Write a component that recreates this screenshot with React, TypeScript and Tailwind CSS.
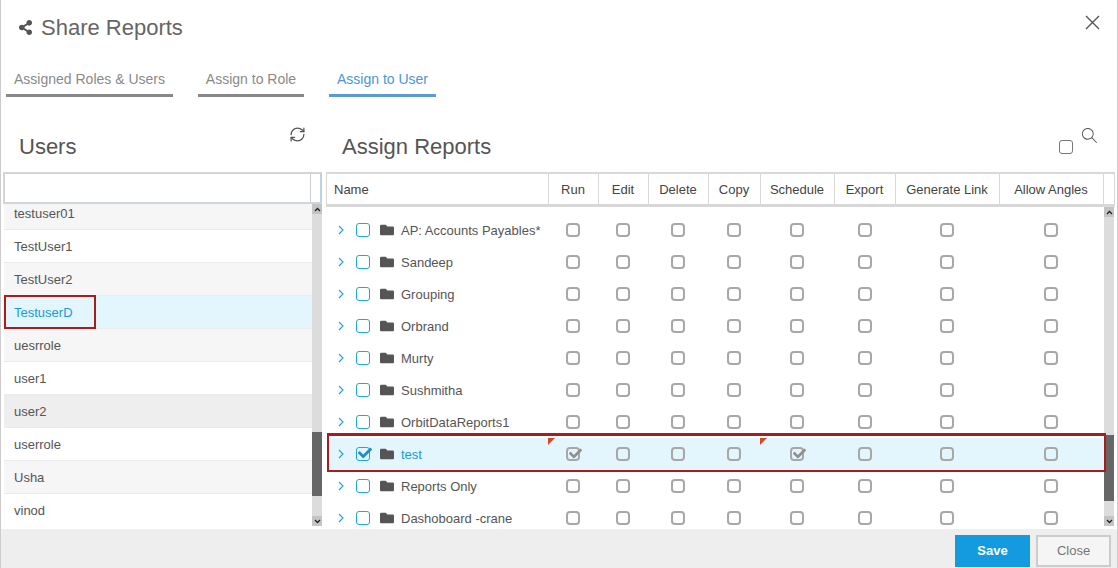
import React from "react";
import { FaShareAlt, FaFolder, FaCheck } from "react-icons/fa";
import { SlMagnifier } from "react-icons/sl";
import { RefreshCw } from "lucide-react";

const users = [
  { n: "testuser01", c: "bg-[#f6f6f6]" },
  { n: "TestUser1", c: "bg-white" },
  { n: "TestUser2", c: "bg-[#f6f6f6]" },
  { n: "TestuserD", c: "bg-[#e3f5fd] text-[#1a9ad6] border-[#cfe5f2]", sel: true },
  { n: "uesrrole", c: "bg-[#f6f6f6]" },
  { n: "user1", c: "bg-white border-[#dfe8ee]" },
  { n: "user2", c: "bg-[#eeeeee]" },
  { n: "userrole", c: "bg-white" },
  { n: "Usha", c: "bg-[#f6f6f6]" },
  { n: "vinod", c: "bg-white" },
];

const reports = [
  "AP: Accounts Payables*",
  "Sandeep",
  "Grouping",
  "Orbrand",
  "Murty",
  "Sushmitha",
  "OrbitDataReports1",
  "test",
  "Reports Only",
  "Dashoboard -crane",
];

const cols = ["Run", "Edit", "Delete", "Copy", "Schedule", "Export", "Generate Link", "Allow Angles"];
const grid = "grid grid-cols-[221px_50px_50px_60px_52px_74px_61px_104px_104px]";
const headGrid = "grid grid-cols-[222px_50px_50px_60px_52px_74px_61px_104px_104px]";

function Box({ checked }: { checked?: boolean }) {
  return (
    <span className="relative block w-[14px] h-[14px] rounded-[4px] border-2 border-[#a8a8a8]">
      {checked && <FaCheck className="absolute left-[1px] top-[-2px] text-[#8f8f8f]" size={13} />}
    </span>
  );
}

function BlueBox({ checked }: { checked?: boolean }) {
  return (
    <span className="relative block w-[14px] h-[14px] rounded-[3px] border-[1.5px] border-[#1fa5e6] shrink-0">
      {checked && <FaCheck className="absolute left-[1px] top-[-2px] text-[#1a8fd0]" size={14} />}
    </span>
  );
}

function Chevron() {
  return (
    <svg width="6" height="10" viewBox="0 0 6 10" className="shrink-0">
      <path d="M1 1l4 4-4 4" fill="none" stroke="#2d9fdb" strokeWidth="1.2" />
    </svg>
  );
}

function Arrow({ up }: { up?: boolean }) {
  return (
    <span className="flex items-center justify-center h-[10px] bg-[#c4c4c4]">
      <svg width="7" height="5" viewBox="0 0 7 5">
        <path d={up ? "M1 4l2.5-2.5L6 4" : "M1 1l2.5 2.5L6 1"} fill="none" stroke="#222" strokeWidth="1.3" />
      </svg>
    </span>
  );
}

function Scrollbar({ before, thumb }: { before: string; thumb: string }) {
  return (
    <div className="w-[10px] h-full flex flex-col bg-[#dcdcdc] shrink-0">
      <Arrow up />
      <div className={before} />
      <div className={`${thumb} bg-[#666666]`} />
      <div className="flex-1" />
      <Arrow />
    </div>
  );
}

function Tab({ label, active, w }: { label: string; active?: boolean; w: string }) {
  return (
    <div className={`${w} h-[27px] border-b-[3px] text-center text-[14px] leading-[19px] ${active ? "border-[#5b9bd5] text-[#4a96d8]" : "border-[#888888] text-[#8a8a8a]"}`}>
      {label}
    </div>
  );
}

export default function App() {
  return (
    <div className="w-[1118px] h-[568px] overflow-hidden flex flex-col bg-white border-x border-[#cccccc] text-[#555555] font-['Liberation_Sans',Arial,sans-serif]">
      <div className="h-[55px] shrink-0 flex items-center pl-[17px] pr-[17px]">
        <FaShareAlt size={15} className="text-[#555555] shrink-0" />
        <span className="ml-[8px] text-[22px] text-[#666666]">Share Reports</span>
        <svg width="15" height="15" viewBox="0 0 15 15" className="ml-auto mb-[11px]">
          <path d="M1 1l13 13M14 1L1 14" stroke="#555555" strokeWidth="1.4" fill="none" />
        </svg>
      </div>

      <div className="h-[42px] mt-[15px] shrink-0 flex gap-[25px] pl-[5px]">
        <Tab label="Assigned Roles & Users" w="w-[167px]" />
        <Tab label="Assign to Role" w="w-[106px]" />
        <Tab label="Assign to User" w="w-[107px]" active />
      </div>

      <div className="flex-1 flex min-h-0">
        <div className="w-[325px] shrink-0 flex flex-col pl-[2px]">
          <div className="h-[60px] shrink-0 relative pl-[16px]">
            <div className="pt-[22px] text-[22px] leading-[25px] text-[#555555]">Users</div>
            <RefreshCw size={17} strokeWidth={1.8} className="absolute left-[286px] top-[14px] text-[#555555]" />
          </div>
          <div className="h-[32px] w-[319px] shrink-0 flex border-2 border-[#d4d4d4] border-r-[#b9d2ea] border-b-[#cfd6de]">
            <div className="w-[306px] border-r border-[#cfcfcf] bg-white" />
          </div>
          <div className="flex-1 min-h-0 flex w-[319px] pl-[1px] pb-[3px]">
            <div className="flex-1 overflow-hidden">
              <div className="-mt-[7px]">
                {users.map((u) => (
                  <div key={u.n} className={`relative h-[33px] border-b last:border-b-0 border-[#ebebeb] pl-[10px] text-[13px] leading-[33px] ${u.c}`}>
                    {u.n}
                    {u.sel && <span className="absolute left-0 top-[-1px] w-[92px] h-[34px] border-2 border-[#a81c1c]" />}
                  </div>
                ))}
              </div>
            </div>
            <Scrollbar before="h-[218px]" thumb="h-[64px]" />
          </div>
        </div>

        <div className="flex-1 min-w-0 flex flex-col">
          <div className="h-[60px] shrink-0 relative pl-[16px]">
            <div className="pt-[22px] text-[22px] leading-[25px] text-[#555555]">Assign Reports</div>
            <span className="absolute left-[733px] top-[28px] block w-[14px] h-[14px] rounded-[3px] border-[1.5px] border-[#777777]" />
            <SlMagnifier size={15} className="absolute left-[756px] top-[16px] text-[#555555]" />
          </div>
          <div className="w-[789px] h-[35px] shrink-0 flex border-t-2 border-x border-[#d8d8d8] border-b-[3px] bg-white">
            <div className={`${headGrid} flex-1 text-[13px] text-[#444444] leading-[31px]`}>
              <div className="pl-[7px] border-r border-[#d8d8d8]">Name</div>
              {cols.map((c) => (
                <div key={c} className="text-center pr-[1px] border-r border-[#d8d8d8]">{c}</div>
              ))}
            </div>
          </div>
          <div className="relative flex-1 min-h-0 flex w-[788px] pl-[1px] pb-[3px]">
            <div className="flex-1 overflow-hidden pt-[7px]">
              {reports.map((r) => {
                const sel = r === "test";
                return (
                  <div key={r} className={`${grid} relative h-[32px] items-center ${sel ? "bg-[#e3f5fd] text-[#1a9ad6]" : ""}`}>
                    <div className="flex items-center pl-[11px] text-[13px]">
                      <Chevron />
                      <span className="ml-[12px]"><BlueBox checked={sel} /></span>
                      <FaFolder size={14} className="ml-[10px] text-[#555555] shrink-0" />
                      <span className="ml-[7px] pt-[2px] whitespace-nowrap">{r}</span>
                    </div>
                    {cols.map((c) => {
                      const on = sel && (c === "Run" || c === "Schedule");
                      return (
                        <div key={c} className="relative h-full flex items-center justify-center">
                          {on && <span className="absolute left-0 top-0 w-0 h-0 border-t-[7px] border-r-[7px] border-t-[#d9472b] border-r-transparent" />}
                          <Box checked={on} />
                        </div>
                      );
                    })}
                  </div>
                );
              })}
            </div>
            <Scrollbar before="h-[218px]" thumb="h-[66px]" />
            <span className="absolute z-10 left-[1px] top-[226px] w-[779px] h-[39px] border-2 border-t-[3px] border-[#a81c1c] pointer-events-none" />
          </div>
        </div>
      </div>

      <div className="h-[39px] shrink-0 bg-[#eeeeee] flex justify-end items-start pt-[6px] pr-[6px] gap-[6px] text-[13px]">
        <button className="w-[75px] h-[32px] bg-[#149ade] text-white font-bold">Save</button>
        <button className="w-[75px] h-[32px] border-2 border-[#cccccc] bg-[#f5f5f5] text-[#777777]">Close</button>
      </div>
    </div>
  );
}
